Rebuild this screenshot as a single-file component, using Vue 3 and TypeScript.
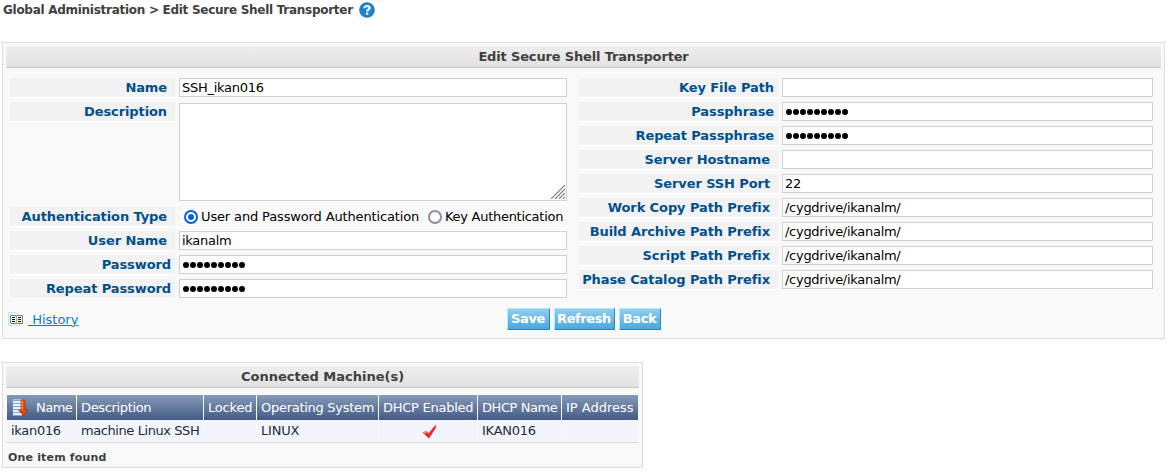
<script setup lang="ts">
import { ref } from 'vue'

interface Field {
  label: string
  value: string
  kind?: 'text' | 'secret' | 'area' | 'radio'
  required?: boolean
}

interface Cell {
  text: string
  tracking: number
}

const left: Field[] = [
  { label: 'Name', value: 'SSH_ikan016' },
  { label: 'Description', value: '', kind: 'area' },
  { label: 'Authentication Type', value: '', kind: 'radio' },
  { label: 'User Name', value: 'ikanalm' },
  { label: 'Password', value: '●●●●●●●●●', kind: 'secret' },
  { label: 'Repeat Password', value: '●●●●●●●●●', kind: 'secret' },
]
const right: Field[] = [
  { label: 'Key File Path', value: '', kind: 'text', required: true },
  { label: 'Passphrase', value: '●●●●●●●●●', kind: 'secret' },
  { label: 'Repeat Passphrase', value: '●●●●●●●●●', kind: 'secret' },
  { label: 'Server Hostname', value: '' },
  { label: 'Server SSH Port', value: '22' },
  { label: 'Work Copy Path Prefix', value: '/cygdrive/ikanalm/' },
  { label: 'Build Archive Path Prefix', value: '/cygdrive/ikanalm/' },
  { label: 'Script Path Prefix', value: '/cygdrive/ikanalm/' },
  { label: 'Phase Catalog Path Prefix', value: '/cygdrive/ikanalm/' },
]
const auth = ref<'user' | 'key'>('user')
const headers: Cell[] = [
  { text: 'Name', tracking: -0.5 },
  { text: 'Description', tracking: -0.35 },
  { text: 'Locked', tracking: -0.2 },
  { text: 'Operating System', tracking: -0.28 },
  { text: 'DHCP Enabled', tracking: -0.26 },
  { text: 'DHCP Name', tracking: -0.42 },
  { text: 'IP Address', tracking: 0 },
]
const machine: Cell[] = [
  { text: 'ikan016', tracking: -0.3 },
  { text: 'machine Linux SSH', tracking: -0.42 },
  { text: '', tracking: 0 },
  { text: 'LINUX', tracking: -0.2 },
  { text: 'check', tracking: 0 },
  { text: 'IKAN016', tracking: -0.25 },
  { text: '', tracking: 0 },
]
</script>

<template>
  <div class="page">
    <div class="crumb">
      <span class="crumb-text">Global Administration &gt; Edit Secure Shell Transporter</span>
      <svg class="help" width="16" height="16" viewBox="0 0 16 16">
        <circle cx="8" cy="8" r="7.800" fill="#1d82c9" />
        <path d="M5.500 6.300C5.500 4.600 6.700 4 8 4c1.500 0 2.600.8 2.600 2 0 1.600-2.400 1.700-2.400 3.600" fill="none" stroke="#fff" stroke-width="2.200" />
        <rect x="7" y="10.600" width="2.300" height="2.200" fill="#fff" />
      </svg>
    </div>

    <section class="panel edit">
      <h2 class="title narrow">Edit Secure Shell Transporter</h2>
      <div class="columns">
        <div v-for="(fields, i) in [left, right]" :key="i" class="col" :class="i ? 'col-right' : 'col-left'">
          <div v-for="f in fields" :key="f.label" class="row" :class="{ tall: f.kind === 'area' }">
            <div class="label" :class="{ tight: f.kind === 'secret' || f.required }">
              <span>{{ f.label }}</span>
            </div>
            <div v-if="f.kind === 'area'" class="field area">
              <svg class="grip" width="14" height="14" viewBox="0 0 14 14">
                <path d="M0 14L14 0M4 14L14 4M8 14L14 8M12 14L14 12" stroke="#777" stroke-width="1.100" />
              </svg>
            </div>
            <div v-else-if="f.kind === 'radio'" class="radios">
              <span class="option first" @click="auth = 'user'">
                <i class="dot" :class="{ on: auth === 'user' }"></i><span>User and Password Authentication</span>
              </span>
              <span class="option second" @click="auth = 'key'">
                <i class="dot" :class="{ on: auth === 'key' }"></i><span>Key Authentication</span>
              </span>
            </div>
            <div v-else class="field" :class="{ secret: f.kind === 'secret' }">
              <template v-if="f.kind === 'secret'"><i v-for="(c, n) in f.value" :key="n" class="bullet"></i></template>
              <span v-else>{{ f.value }}</span>
            </div>
          </div>
        </div>
      </div>
      <div class="actions">
        <div class="history">
          <svg width="15" height="14" viewBox="0 0 15 14">
            <path d="M.5 13.500V.5H8.500l3 3v10z" fill="#f5fbfe" stroke="#c3e2f2" />
            <path d="M2.500 3.500H14.500v8H2.500z" fill="#fff6df" stroke="#5f7fae" />
            <path d="M8.500 3.500v8" stroke="#b8a988" />
            <path d="M4 5.500h3M4 7.500h3M4 9.500h3M10 5.500h3M10 7.500h3M10 9.500h3" stroke="#10161f" />
          </svg>
          <a>&nbsp;History</a>
        </div>
        <div class="buttons">
          <button class="save">Save</button>
          <button class="refresh">Refresh</button>
          <button class="back">Back</button>
        </div>
      </div>
    </section>

    <section class="panel machines">
      <h2 class="title">Connected Machine(s)</h2>
      <div class="grid head">
        <div v-for="(h, i) in headers" :key="h.text" class="th">
          <svg v-if="i === 0" class="sort" width="17" height="18" viewBox="0 0 17 18">
            <path d="M2 .5h9v16H2z" fill="#e9f4ff" />
            <path d="M1.500 1.500H10M1.500 4.500h9M1.500 7.500h9M1.500 10.500h9M1.500 13.500h9M1.500 16.500h9" stroke="#72a6dc" />
            <path d="M10 1h4v9.500h3L12.500 17 7.500 11H10z" fill="#dc4a0b" stroke="#b62c08" stroke-width=".6" />
            <path d="M10.600 1.500H12v9h-1.400z" fill="#f79534" />
          </svg>
          <span :style="{ letterSpacing: h.tracking + 'px' }">{{ h.text }}</span>
        </div>
      </div>
      <div class="grid body">
        <div v-for="(m, i) in machine" :key="i" class="td" :class="{ center: m.text === 'check' }">
          <svg v-if="m.text === 'check'" width="15" height="15" viewBox="0 0 15 15">
            <path d="M.5 8.500l4-1.500 2 2.500L13.800.5v3.500L7 14.500z" fill="#ee2229" />
            <path d="M.5 8.500l4-1.500.8 1-2.500 2.500z" fill="#f47b7c" />
          </svg>
          <span v-else :style="{ letterSpacing: m.tracking + 'px' }">{{ m.text }}</span>
        </div>
      </div>
      <div class="found"><span>One item found</span></div>
    </section>
  </div>
</template>

<style>
body { margin: 0; background: #fff; }
</style>

<style scoped>
.page { box-sizing: border-box; width: 1174px; height: 473px; padding: 0 9px 0 2px; overflow: hidden; font: 13px/19px Verdana, "DejaVu Sans", sans-serif; color: #000; white-space: nowrap; }
.page * { box-sizing: border-box; }
.crumb { display: flex; align-items: center; height: 20px; padding-left: 1px; color: #404040; font-size: 12px; font-weight: bold; }
.crumb-text { width: 356px; letter-spacing: -.28px; }
.panel { border: 1px solid #dcdcdc; background: #f9f9f9; padding: 3px; }
.edit { width: 1163px; height: 297px; margin-top: 22px; }
.title { margin: 0; height: 22px; border-bottom: 1px solid #c8c8c8; background: linear-gradient(#eee, #e2e2e2); color: #404040; font-size: 13px; line-height: 21px; text-align: center; }
.narrow { letter-spacing: -.16px; }
.columns { display: flex; gap: 12px; padding: 10px 0 0 4px; }
.col { display: flex; flex-direction: column; gap: 5px; }
.col-left { width: 557px; }
.col-right { width: 574px; }
.row { display: flex; gap: 4px; align-items: flex-start; min-height: 19px; }
.row.tall { height: 100px; }
.label { flex: none; width: 165px; height: 19px; padding-right: 8px; background: #f2f2f2; box-shadow: 0 1px #fff; color: #00508c; font-weight: bold; text-align: right; letter-spacing: -.1px; }
.col-right .label { width: 199px; }
.label.tight { padding-right: 4px; }
.field { display: flex; align-items: center; flex: 1; height: 19px; padding-left: 2px; border: 1px solid #d0d0d0; background: #fff; line-height: 17px; letter-spacing: -.28px; }
.field.area { height: 98px; margin-top: 1px; align-items: flex-end; justify-content: flex-end; padding: 0 1px 1px 0; }
.grip { display: block; }
.bullet { width: 6px; height: 6px; border-radius: 50%; background: #000; margin-right: 1px; }
.field.secret { padding: 1px 0 0 3px; }
.radios { display: flex; flex: 1; height: 19px; padding-left: 5px; }
.option { display: flex; align-items: center; gap: 3px; }
.option.first { width: 244px; letter-spacing: -.14px; }
.option.second { letter-spacing: -.28px; }
.dot { display: grid; place-items: center; width: 14px; height: 14px; border: 2px solid #8f8f9d; border-radius: 50%; background: #fff; }
.dot.on { border-color: #0060df; }
.dot.on::after { content: ""; width: 6px; height: 6px; border-radius: 50%; background: #0060df; }
.actions { display: flex; align-items: flex-start; padding: 10px 0 0 2px; }
.history { display: flex; align-items: center; width: 499px; height: 22px; gap: 5px; }
.history a { color: #0080cc; text-decoration: underline; }
.buttons { display: flex; gap: 4px; }
button { height: 22px; padding: 0; border: 1px solid; border-color: #b1ecff #2586c5 #2586c5 #b1ecff; background: linear-gradient(#91cdef, #4aa9dd); color: #fff; font: bold 13px/18px Verdana, "DejaVu Sans", sans-serif; letter-spacing: -.4px; padding: 0 1px 1px 0; }
.save { width: 43px; }
.refresh { width: 61px; }
.back { width: 42px; }
.machines { width: 641px; height: 106px; margin-top: 23px; }
.grid { display: grid; grid-template-columns: 69px 126px 52px 121px 98px 83px 76px; column-gap: 1px; padding-left: 1px; }
.head { height: 25px; margin-top: 7px; color: #fff; line-height: 25px; }
.th { display: flex; padding-left: 4px; background: linear-gradient(#8899b8, #425b86); }
.sort { flex: none; margin: 4px 8px 0 0; }
.body { height: 23px; border-bottom: 1px solid #dcdcdc; line-height: 21px; color: #222c38; }
.td { padding-left: 4px; background: #f2f6fc; }
.td.center { display: flex; justify-content: center; align-items: center; padding: 0 0 0 2px; }
.found { padding: 5px 2px 0; color: #404040; font-size: 11px; font-weight: bold; letter-spacing: .17px; }
</style>
